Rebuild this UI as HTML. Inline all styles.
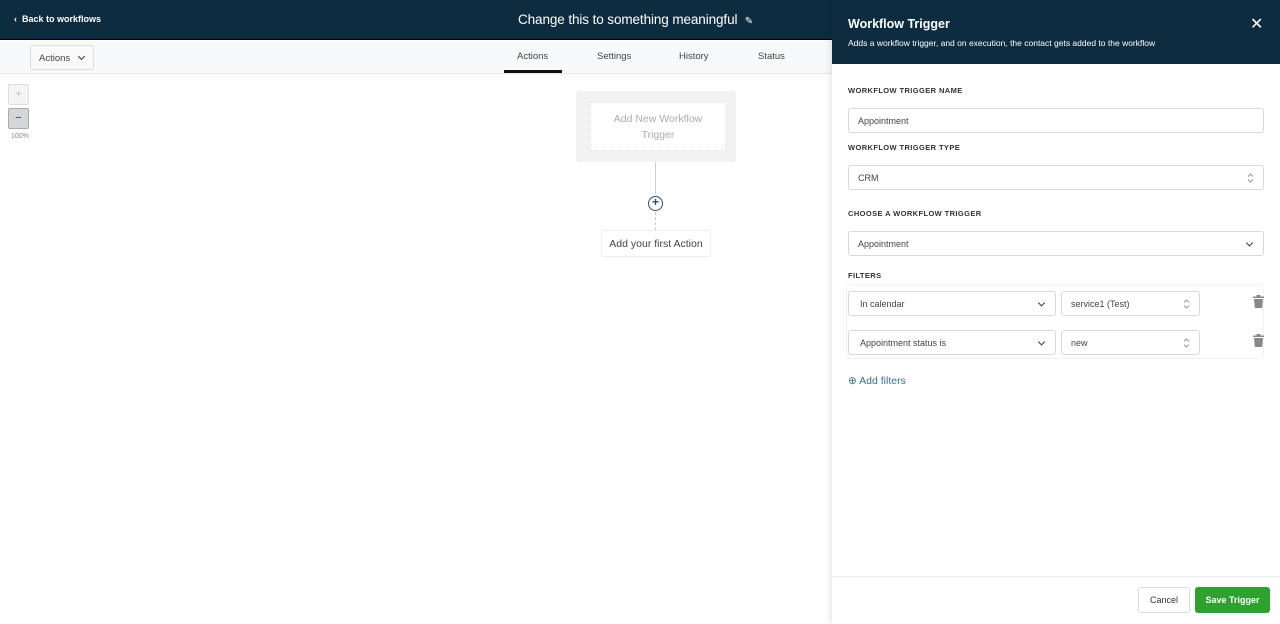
<!DOCTYPE html>
<html><head><style>
*{box-sizing:border-box;margin:0;padding:0}
body{width:1280px;height:624px;overflow:hidden;font-family:"Liberation Sans",sans-serif;background:#fff;position:relative;color:#333}
.top{position:absolute;left:0;top:0;width:1280px;height:40px;background:#0e2c40;border-bottom:1px solid #000}
.abs{position:absolute}
.sub{position:absolute;left:0;top:41px;width:832px;height:33px;background:#f8f9fa;border-bottom:1px solid #e6e6e6}
.tab{position:absolute;top:51px;font-size:9.5px;color:#444}
.panel{position:absolute;left:832px;top:0;width:448px;height:624px;background:#fff;box-shadow:-2px 0 6px rgba(0,0,0,.1)}
.ph{position:absolute;left:0;top:0;width:448px;height:64px;background:#0e2c40}
.lbl{position:absolute;left:16px;font-size:7.5px;font-weight:bold;letter-spacing:.4px;color:#333}
.inp{position:absolute;border:1px solid #d6d9dc;border-radius:3px;background:#fff;font-size:9px;color:#444;padding-left:9px;display:flex;align-items:center}
.car{position:absolute;right:9px;top:50%;transform:translateY(-50%)}
.chev{position:absolute;right:11px;top:50%;width:5px;height:5px;border-right:1.5px solid #333;border-bottom:1.5px solid #333;transform:translateY(-70%) rotate(45deg)}
</style></head><body>
<div class="top"></div>
<div class="abs" style="left:14px;top:14px;color:#fff;font-size:9px;font-weight:bold">‹&nbsp; Back to workflows</div>
<div class="abs" style="left:518px;top:12px;color:#fff;font-size:13.5px;letter-spacing:-0.1px">Change this to something meaningful &nbsp;<span style="font-size:10px">✎</span></div>
<div class="sub"></div>
<div class="abs" style="left:30px;top:45px;width:64px;height:25px;border:1px solid #ddd;border-radius:3px;background:#fafafa;font-size:9.5px;color:#444;padding:7px 0 0 8px">Actions <span style="display:inline-block;width:5px;height:5px;border-right:1.5px solid #333;border-bottom:1.5px solid #333;transform:rotate(45deg);margin:0 0 2px 6px"></span></div>
<div class="tab" style="left:517px">Actions</div>
<div class="abs" style="left:504px;top:70px;width:58px;height:3px;background:#111"></div>
<div class="tab" style="left:597px">Settings</div>
<div class="tab" style="left:679px">History</div>
<div class="tab" style="left:758px">Status</div>
<div class="abs" style="left:8px;top:84px;width:21px;height:21px;border:1px solid #ddd;border-radius:2px;background:#f4f4f6;color:#bbb;font-size:10px;text-align:center;line-height:19px">+</div>
<div class="abs" style="left:8px;top:108px;width:21px;height:21px;border:1px solid #aaa;border-radius:2px;background:#d4d6dc;color:#333;font-size:11px;text-align:center;line-height:19px">−</div>
<div class="abs" style="left:11px;top:133px;font-size:7px;color:#888">100%</div>
<div class="abs" style="left:576px;top:91px;width:160px;height:71px;background:#f2f2f3;border-radius:3px"></div>
<div class="abs" style="left:590px;top:102px;width:136px;height:49px;background:#fff;border:1px dotted #ddd;color:#aab;font-size:10.5px;text-align:center;line-height:16px;padding-top:8px">Add New Workflow<br>Trigger</div>
<div class="abs" style="left:655px;top:162px;width:1px;height:32px;background:#ccc"></div>
<div class="abs" style="left:648px;top:196px;width:15px;height:15px;border:1.5px solid #1f4e79;border-radius:50%;color:#1f4e79;font-size:12px;line-height:11px;text-align:center;font-weight:bold">+</div>
<div class="abs" style="left:655px;top:212px;width:0;height:18px;border-left:1px dashed #ccc"></div>
<div class="abs" style="left:601px;top:230px;width:110px;height:27px;border:1px solid #eee;border-radius:3px;font-size:10.5px;color:#444;text-align:center;line-height:26px">Add your first Action</div>
<div class="panel">
<div class="ph"></div>
<div class="abs" style="left:16px;top:17px;color:#fff;font-size:12.5px;font-weight:bold">Workflow Trigger</div>
<div class="abs" style="left:16px;top:38px;color:#fff;font-size:8.5px">Adds a workflow trigger, and on execution, the contact gets added to the workflow</div>
<div class="abs" style="left:418px;top:14px;color:#fff;font-size:16px">✕</div>
<div class="lbl" style="top:86px">WORKFLOW TRIGGER NAME</div>
<div class="inp" style="left:16px;top:108px;width:416px;height:25px">Appointment</div>
<div class="lbl" style="top:143px">WORKFLOW TRIGGER TYPE</div>
<div class="inp" style="left:16px;top:165px;width:416px;height:25px">CRM<svg class="car" width="7" height="11" viewBox="0 0 7 11"><path d="M1 4 3.5 1.5 6 4M1 7 3.5 9.5 6 7" fill="none" stroke="#999" stroke-width="1"/></svg></div>
<div class="lbl" style="top:209px">CHOOSE A WORKFLOW TRIGGER</div>
<div class="inp" style="left:16px;top:231px;width:416px;height:25px">Appointment<span class="chev"></span></div>
<div class="lbl" style="top:271px">FILTERS</div>
<div class="abs" style="left:14px;top:284px;width:418px;height:75px;border:1px solid #f2f2f2;border-radius:4px"></div>
<div class="inp" style="left:16px;top:291px;width:208px;height:25px;padding-left:11px">In calendar<span class="chev"></span></div>
<div class="inp" style="left:229px;top:291px;width:139px;height:25px">service1 (Test)<svg class="car" width="7" height="11" viewBox="0 0 7 11"><path d="M1 4 3.5 1.5 6 4M1 7 3.5 9.5 6 7" fill="none" stroke="#999" stroke-width="1"/></svg></div>
<svg class="abs" style="left:421px;top:295px" width="11" height="13" viewBox="0 0 11 13"><rect x="0" y="1.5" width="11" height="1.5" fill="#888"/><rect x="3.5" y="0" width="4" height="2" fill="#888"/><path d="M1 4h9l-.8 9H1.8z" fill="#888"/></svg>
<div class="inp" style="left:16px;top:330px;width:208px;height:25px;padding-left:11px">Appointment status is<span class="chev"></span></div>
<div class="inp" style="left:229px;top:330px;width:139px;height:25px">new<svg class="car" width="7" height="11" viewBox="0 0 7 11"><path d="M1 4 3.5 1.5 6 4M1 7 3.5 9.5 6 7" fill="none" stroke="#999" stroke-width="1"/></svg></div>
<svg class="abs" style="left:421px;top:334px" width="11" height="13" viewBox="0 0 11 13"><rect x="0" y="1.5" width="11" height="1.5" fill="#888"/><rect x="3.5" y="0" width="4" height="2" fill="#888"/><path d="M1 4h9l-.8 9H1.8z" fill="#888"/></svg>
<div class="abs" style="left:16px;top:375px;font-size:10.5px;color:#3a6c96">⊕ Add filters</div>
<div class="abs" style="left:0;top:576px;width:448px;height:1px;background:#eee"></div>
<div class="abs" style="left:306px;top:587px;width:52px;height:26px;border:1px solid #ddd;border-radius:3px;font-size:9px;color:#333;text-align:center;line-height:24px">Cancel</div>
<div class="abs" style="left:363px;top:587px;width:75px;height:26px;background:#2ea12e;border-radius:3px;font-size:9px;font-weight:bold;color:#fff;text-align:center;line-height:26px">Save Trigger</div>
</div>
</body></html>
